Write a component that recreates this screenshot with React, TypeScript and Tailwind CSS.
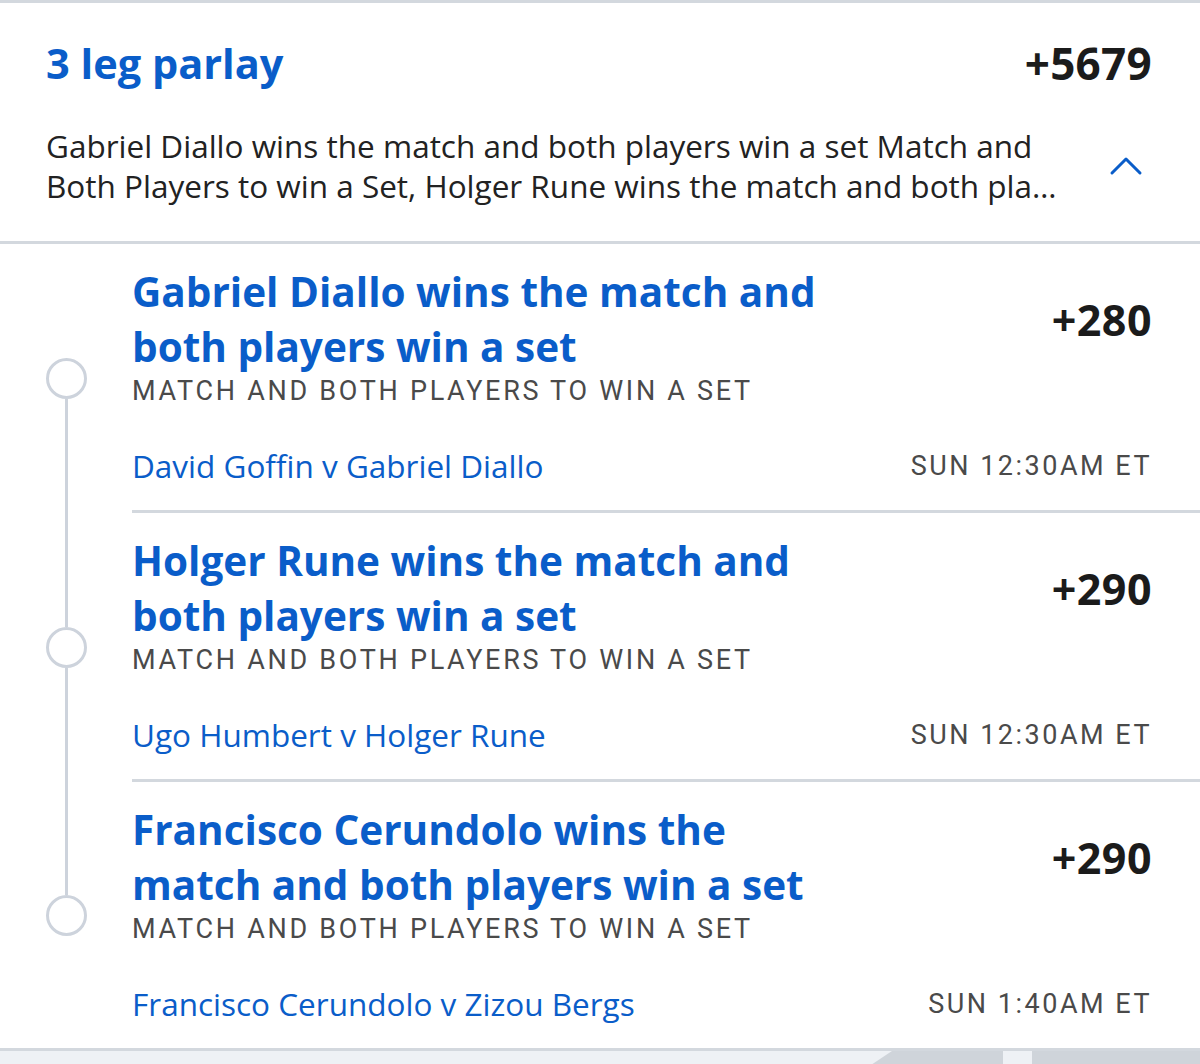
import React from 'react'

type Leg = {
  title: string
  market: string
  event: string
  time: string
  odds: string
}

const legs: Leg[] = [
  {
    title: 'Gabriel Diallo wins the match and both players win a set',
    market: 'Match and Both Players to win a Set',
    event: 'David Goffin v Gabriel Diallo',
    time: 'SUN 12:30AM ET',
    odds: '+280',
  },
  {
    title: 'Holger Rune wins the match and both players win a set',
    market: 'Match and Both Players to win a Set',
    event: 'Ugo Humbert v Holger Rune',
    time: 'SUN 12:30AM ET',
    odds: '+290',
  },
  {
    title: 'Francisco Cerundolo wins the match and both players win a set',
    market: 'Match and Both Players to win a Set',
    event: 'Francisco Cerundolo v Zizou Bergs',
    time: 'SUN 1:40AM ET',
    odds: '+290',
  },
]

const sans = "font-['Open_Sans','Liberation_Sans',sans-serif]"

function ChevronUp() {
  return (
    <svg width="34" height="20" viewBox="0 0 34 20" fill="none" className="shrink-0">
      <path d="M3 17 L17 3 L31 17" stroke="#0a5dc9" strokeWidth="3" strokeLinecap="round" strokeLinejoin="round" />
    </svg>
  )
}

function LegRow({ leg, index, total }: { leg: Leg; index: number; total: number }) {
  const isFirst = index === 0
  const isLast = index === total - 1
  return (
    <div className="flex">
      {/* timeline column */}
      <div className="flex w-[132px] shrink-0 flex-col items-center">
        <div className={`w-[3px] flex-1 ${isFirst ? 'bg-transparent' : 'bg-[#cdd3dc]'}`} />
        <div className="h-[41px] w-[41px] shrink-0 rounded-full border-[3px] border-[#cdd3dc] bg-white" />
        <div className={`w-[3px] flex-1 ${isLast ? 'bg-transparent' : 'bg-[#cdd3dc]'}`} />
      </div>

      <div className={`flex-1 pb-[24px] pr-[48px] pt-[20px] ${isLast ? '' : 'border-b-[3px] border-[#d3d8de]'}`}>
        <div className="flex items-center justify-between">
          <h2 className="w-[705px] text-[40.5px] font-bold leading-[55px] text-[#0a5dc9]">{leg.title}</h2>
          <span className="text-[43px] font-bold leading-none tracking-[0.5px] text-[#1b1b1b]">{leg.odds}</span>
        </div>
        <p className="mt-[2px] font-['Roboto',sans-serif] text-[27px] uppercase leading-[30px] tracking-[2.7px] text-[#4a4a4a]">
          {leg.market}
        </p>
        <div className="mt-[40px] flex items-center justify-between leading-[40px]">
          <span className="text-[31.5px] text-[#0a5dc9]">{leg.event}</span>
          <span className="font-['Roboto',sans-serif] text-[27px] tracking-[2.5px] text-[#4a4a4a]">{leg.time}</span>
        </div>
      </div>
    </div>
  )
}

export default function App() {
  return (
    <div className={`h-[1064px] w-[1200px] overflow-hidden bg-[#eef1f5] ${sans}`}>
      <div className="border-y-[3px] border-[#d3d8de] bg-white">
        <header className="border-b-[3px] border-[#d3d8de] px-[46px] pb-[35px] pt-[35px]">
          <div className="flex items-center justify-between">
            <h1 className="text-[41.5px] font-bold leading-[50px] text-[#0a5dc9]">3 leg parlay</h1>
            <span className="pr-[2px] text-[44px] font-bold leading-[50px] tracking-[0.3px] text-[#1b1b1b]">+5679</span>
          </div>
          <div className="mt-[38px] flex items-center justify-between">
            <p className="text-[31.5px] leading-[40px] text-[#222]">
              <span className="block whitespace-nowrap">Gabriel Diallo wins the match and both players win a set Match and</span>
              <span className="block whitespace-nowrap">Both Players to win a Set, Holger Rune wins the match and both pla…</span>
            </p>
            <div className="pr-[11px]">
              <ChevronUp />
            </div>
          </div>
        </header>

        {legs.map((leg, i) => (
          <LegRow key={i} leg={leg} index={i} total={legs.length} />
        ))}
      </div>

      <div className="flex h-[16px] justify-end">
        <svg width="400" height="16" viewBox="0 0 400 16" className="shrink-0">
          <polygon points="68,16 92,0 203,0 203,16" fill="#cfd4da" />
          <rect x="232" y="0" width="168" height="16" fill="#cfd4da" />
        </svg>
      </div>
    </div>
  )
}
